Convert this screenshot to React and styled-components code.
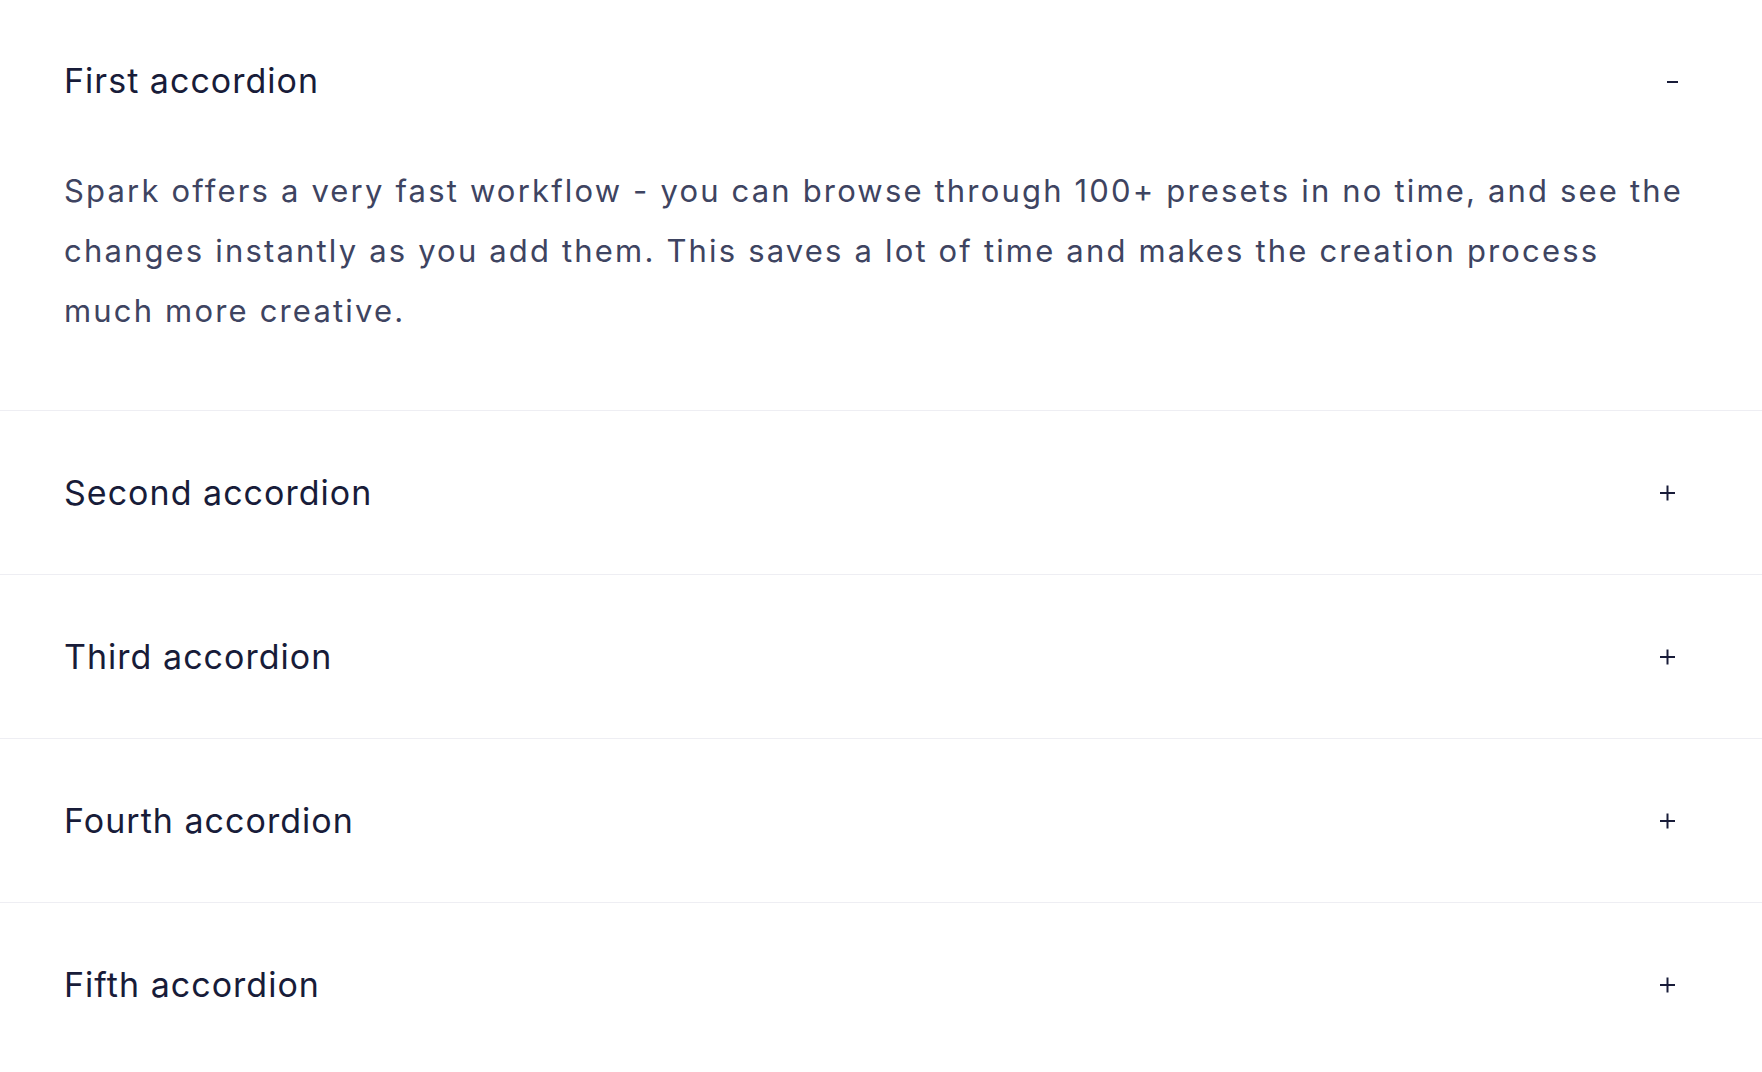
import React, { useState } from 'react';
import styled, { createGlobalStyle } from 'styled-components';

const items = [
  {
    title: 'First accordion',
    body: 'Spark offers a very fast workflow - you can browse through 100+ presets in no time, and see the changes instantly as you add them. This saves a lot of time and makes the creation process much more creative.',
  },
  { title: 'Second accordion', body: 'Spark offers a very fast workflow - you can browse through 100+ presets in no time.' },
  { title: 'Third accordion', body: 'Spark offers a very fast workflow - you can browse through 100+ presets in no time.' },
  { title: 'Fourth accordion', body: 'Spark offers a very fast workflow - you can browse through 100+ presets in no time.' },
  { title: 'Fifth accordion', body: 'Spark offers a very fast workflow - you can browse through 100+ presets in no time.' },
];

function Toggle({ open }) {
  return (
    <ToggleIcon viewBox="0 0 24 24" aria-hidden="true">
      {open ? (
        <line x1="11" y1="13" x2="22" y2="13" />
      ) : (
        <>
          <line x1="4" y1="12" x2="19" y2="12" />
          <line x1="11.5" y1="4.5" x2="11.5" y2="19.5" />
        </>
      )}
    </ToggleIcon>
  );
}

function App() {
  const [openIndex, setOpenIndex] = useState(0);

  return (
    <>
      <GlobalStyle />
      <Accordion>
        {items.map((item, index) => {
          const open = openIndex === index;
          return (
            <Item key={index}>
              <Header $open={open} onClick={() => setOpenIndex(open ? -1 : index)}>
                <Title>{item.title}</Title>
                <Toggle open={open} />
              </Header>
              {open ? (
                <Panel>
                  <Text>{item.body}</Text>
                </Panel>
              ) : null}
            </Item>
          );
        })}
      </Accordion>
    </>
  );
}

const GlobalStyle = createGlobalStyle`
  html, body {
    margin: 0;
    padding: 0;
    background: #ffffff;
  }
  * {
    box-sizing: border-box;
  }
`;

const Accordion = styled.div`
  width: 100%;
  background: #ffffff;
  font-family: Inter, 'Liberation Sans', sans-serif;
`;

const Item = styled.div`
  & + & {
    border-top: 1px solid #eeeef3;
  }
`;

const Header = styled.div`
  display: flex;
  align-items: center;
  justify-content: space-between;
  padding: ${(p) => (p.$open ? '60px 64px' : '61px 64px')};
  cursor: pointer;
  user-select: none;
`;

const Title = styled.span`
  font-size: 34px;
  line-height: 41px;
  font-weight: 400;
  letter-spacing: 0.03em;
  color: #181c39;
`;

const ToggleIcon = styled.svg`
  width: 24px;
  height: 24px;
  margin-right: 18px;
  flex-shrink: 0;
  stroke: #181c39;
  stroke-width: 2;
  fill: none;
`;

const Panel = styled.div`
  padding: 0 76px 69px 64px;
`;

const Text = styled.p`
  margin: 0;
  font-size: 31px;
  line-height: 60px;
  letter-spacing: 0.07em;
  color: #3e4461;
`;

export default App;
